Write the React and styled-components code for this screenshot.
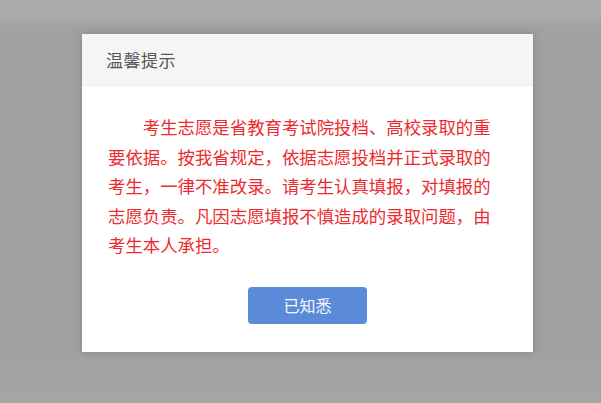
import React from "react";
import styled, { createGlobalStyle } from "styled-components";

const GlobalStyle = createGlobalStyle`
  html, body {
    margin: 0;
    padding: 0;
  }
  body {
    font-family: "Noto Sans CJK SC", "Noto Sans", sans-serif;
  }
`;

const Overlay = styled.div`
  width: 601px;
  height: 403px;
  box-sizing: border-box;
  padding: 34px 0 0 82px;
  background: linear-gradient(180deg, #acacac 0%, #aaaaaa 4%, #a1a1a1 7%, #a0a0a0 85%, #a5a5a5 100%);
  overflow: hidden;
`;

const Dialog = styled.div`
  width: 451px;
  height: 318px;
  background: #ffffff;
  box-shadow: 0 0 8px rgba(0, 0, 0, 0.18);
  display: flex;
  flex-direction: column;
`;

const Header = styled.div`
  height: 52px;
  box-sizing: border-box;
  padding-left: 24px;
  display: flex;
  align-items: center;
  background: #f5f5f5;
  border-bottom: 1px solid #ececec;
`;

const Title = styled.h3`
  margin: 0;
  font-size: 17px;
  font-weight: 400;
  color: #555555;
  letter-spacing: 0.5px;
`;

const Body = styled.div`
  flex: 1;
  padding: 26px 0 27px 26px;
  display: flex;
  flex-direction: column;
  align-items: flex-start;
`;

const Notice = styled.p`
  margin: 0;
  width: 385px;
  font-size: 17.4px;
  line-height: 29.5px;
  color: #ec2b2f;
  text-indent: 2em;
  line-break: strict;
`;

const ConfirmButton = styled.button`
  margin: 27px 0 0 140px;
  width: 119px;
  height: 37px;
  border: none;
  border-radius: 4px;
  background: #5b8bd8;
  color: #f4f8ff;
  font-family: "Noto Sans CJK SC", sans-serif;
  font-size: 16px;
  cursor: pointer;
`;

export default function App() {
  return (
    <>
      <GlobalStyle />
      <Overlay>
        <Dialog>
          <Header>
            <Title>温馨提示</Title>
          </Header>
          <Body>
            <Notice>
              考生志愿是省教育考试院投档、高校录取的重要依据。按我省规定，依据志愿投档并正式录取的考生，一律不准改录。请考生认真填报，对填报的志愿负责。凡因志愿填报不慎造成的录取问题，由考生本人承担。
            </Notice>
            <ConfirmButton>已知悉</ConfirmButton>
          </Body>
        </Dialog>
      </Overlay>
    </>
  );
}
